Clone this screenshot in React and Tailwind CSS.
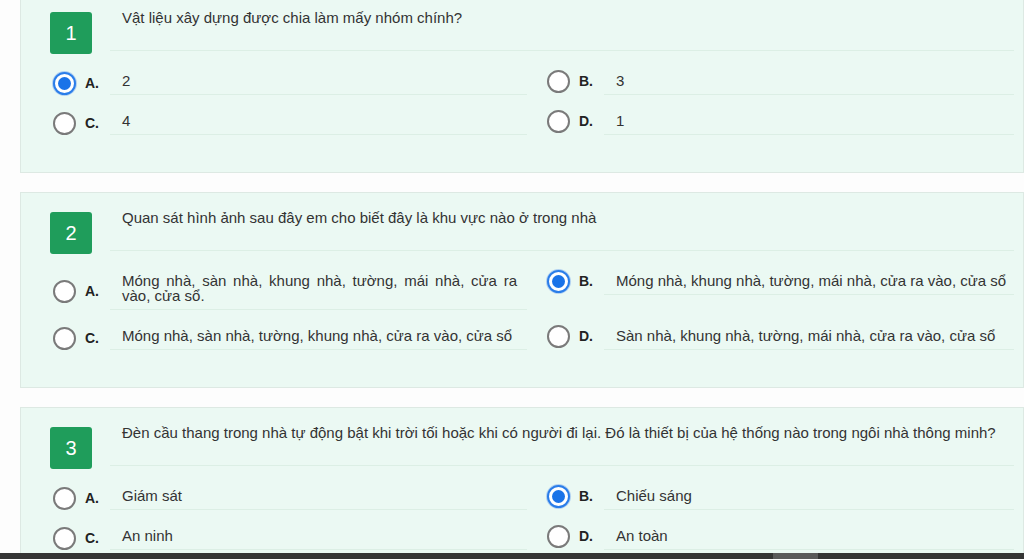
import React from "react";

const questions = [
  {
    n: 1,
    q: "Vật liệu xây dựng được chia làm mấy nhóm chính?",
    opts: [
      ["A.", "2", true],
      ["B.", "3", false],
      ["C.", "4", false],
      ["D.", "1", false],
    ],
    first: true,
  },
  {
    n: 2,
    q: "Quan sát hình ảnh sau đây em cho biết đây là khu vực nào ở trong nhà",
    opts: [
      ["A.", "Móng nhà, sàn nhà, khung nhà, tường, mái nhà, cửa ra vào, cửa sổ.", false],
      ["B.", "Móng nhà, khung nhà, tường, mái nhà, cửa ra vào, cửa sổ", true],
      ["C.", "Móng nhà, sàn nhà, tường, khung nhà, cửa ra vào, cửa sổ", false],
      ["D.", "Sàn nhà, khung nhà, tường, mái nhà, cửa ra vào, cửa sổ", false],
    ],
  },
  {
    n: 3,
    q: "Đèn cầu thang trong nhà tự động bật khi trời tối hoặc khi có người đi lại. Đó là thiết bị của hệ thống nào trong ngôi nhà thông minh?",
    opts: [
      ["A.", "Giám sát", false],
      ["B.", "Chiếu sáng", true],
      ["C.", "An ninh", false],
      ["D.", "An toàn", false],
    ],
  },
];

function Radio({ checked }) {
  if (checked) {
    return (
      <div className="ml-[3px] flex h-[23px] w-[23px] shrink-0 items-center justify-center rounded-full border-[2px] border-[#2a7de9] bg-white shadow-[0_0_0_1px_rgba(120,170,240,0.5)]">
        <div className="h-[13px] w-[13px] rounded-full bg-[#1a73e8]" />
      </div>
    );
  }
  return (
    <div className="ml-[3px] h-[23px] w-[23px] shrink-0 rounded-full border-[2px] border-[#7a7a7a] bg-white" />
  );
}

function Option({ label, text, checked, left }) {
  return (
    <div className={left ? "flex w-[494px] items-center pr-[17px]" : "flex flex-1 items-start"}>
      <div className={left ? "flex w-[60px] shrink-0 items-center pt-[4px]" : "flex w-[60px] shrink-0 items-center pt-[2px]"}>
        <Radio checked={checked} />
        <span className="ml-[9px] text-[14px] font-bold text-[#222]">{label}</span>
      </div>
      <div
        className={
          left
            ? "flex-1 border-b border-[#dcefe5] pb-[6px] pl-[12px] pr-[10px] pt-[5px] text-justify text-[15px] leading-[15px] text-[#333]"
            : "flex-1 border-b border-[#dcefe5] pb-[6px] pl-[12px] pt-[5px] text-[15px] leading-[15px] text-[#333]"
        }
      >
        {text}
      </div>
    </div>
  );
}

function Card({ n, q, opts, first }) {
  return (
    <div
      className={
        "ml-[20px] border border-[#dde9e3] bg-[#ebf9f3] pb-[37px] pl-[29px] pr-[9px] " +
        (first ? "border-t-0 pt-[10px]" : "pt-[17px]")
      }
    >
      <div className="flex items-start">
        <div className="mt-[2px] flex h-[42px] w-[42px] shrink-0 items-center justify-center rounded-[3px] bg-[#1f9d5b] text-[20px] text-white">
          {n}
        </div>
        <div className="ml-[18px] h-[41px] flex-1 border-b border-[#dcefe5] pl-[12px] text-[15px] leading-[16px] text-[#333]">
          {q}
        </div>
      </div>
      <div className="mt-[14px] flex flex-col gap-[13px]">
        <div className="flex">
          <Option label={opts[0][0]} text={opts[0][1]} checked={opts[0][2]} left />
          <Option label={opts[1][0]} text={opts[1][1]} checked={opts[1][2]} />
        </div>
        <div className="flex">
          <Option label={opts[2][0]} text={opts[2][1]} checked={opts[2][2]} left />
          <Option label={opts[3][0]} text={opts[3][1]} checked={opts[3][2]} />
        </div>
      </div>
    </div>
  );
}

export default function App() {
  return (
    <div
      className="flex h-[559px] w-[1024px] flex-col overflow-hidden bg-[#fdfdfd]"
      style={{ fontFamily: '"Liberation Sans", Arial, sans-serif' }}
    >
      <div className="flex flex-1 flex-col gap-[19px] overflow-hidden">
        {questions.map((qq) => (
          <Card key={qq.n} {...qq} />
        ))}
      </div>
      <div className="flex h-[6px] shrink-0 bg-[#353535]">
        <div className="w-[773px]" />
        <div className="w-[45px] bg-[#5a5a5a]" />
      </div>
    </div>
  );
}
